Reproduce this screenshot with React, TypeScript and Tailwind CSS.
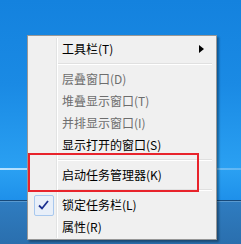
import React from "react";

const font = { fontFamily: '"Noto Sans CJK SC", "Microsoft YaHei", sans-serif' };

type Item =
  | { kind: "item"; label: string; disabled?: boolean; arrow?: boolean; checked?: boolean }
  | { kind: "sep" };

const items: Item[] = [
  { kind: "item", label: "工具栏(T)", arrow: true },
  { kind: "sep" },
  { kind: "item", label: "层叠窗口(D)", disabled: true },
  { kind: "item", label: "堆叠显示窗口(T)", disabled: true },
  { kind: "item", label: "并排显示窗口(I)", disabled: true },
  { kind: "item", label: "显示打开的窗口(S)" },
  { kind: "sep" },
  { kind: "item", label: "启动任务管理器(K)" },
  { kind: "sep" },
  { kind: "item", label: "锁定任务栏(L)", checked: true },
  { kind: "item", label: "属性(R)" },
];

const MenuRow = ({ item }: { item: Item }) => {
  if (item.kind === "sep") {
    return (
      <div className="flex h-[8px] items-center pl-[28px] pr-[2px]">
        <div className="h-[2px] flex-1 border-t border-[#e0e0e0] border-b-white" style={{ borderBottomWidth: 1, borderBottomStyle: "solid" }} />
      </div>
    );
  }
  return (
    <div className="flex h-[22px] items-center">
      <div className="flex w-[26px] justify-center pl-[1px]">
        {item.checked && (
          <div className="flex h-[21px] w-[20px] items-center justify-center rounded-[2px] border border-[#a8c8ee] bg-[#e8eff9]">
            <svg width="11" height="10" viewBox="0 0 11 10">
              <path d="M1 5.5 L4 8.5 L10 1" fill="none" stroke="#1b2f8f" strokeWidth="1.8" />
            </svg>
          </div>
        )}
      </div>
      <div
        className={`flex-1 pl-[6px] text-[12px] leading-none ${item.disabled ? "text-[#6d6d6d]" : "text-black"}`}
      >
        {item.label}
      </div>
      {item.arrow && (
        <svg width="5" height="8" viewBox="0 0 5 8" className="mr-[10px]">
          <path d="M0 0 L5 4 L0 8 Z" fill="#000" />
        </svg>
      )}
    </div>
  );
};

export default function App() {
  return (
    <div className="relative h-[244px] w-[241px] overflow-hidden" style={font}>
      <div className="flex h-full flex-col">
        <div className="h-[168px] bg-gradient-to-b from-[#1482de] via-[#1a8ae4] to-[#2aa0f2]" />
        <div className="h-[2px] bg-gradient-to-r from-[#b8e2ff] via-[#8dcdf8] to-[#5fb6f4]" />
        <div className="h-[30px] bg-gradient-to-b from-[#2aa0f2] to-[#1e90ea]" />
        <div className="h-[1px] bg-[#17497a]" />
        <div className="flex-1 border-t border-[#5a9ad0] bg-gradient-to-b from-[#2f7cc0] to-[#2a6fae]" />
      </div>

      <div className="absolute left-[27px] top-[35px] w-[190px] border border-[#979797] bg-[#f0f0f0] px-[2px] pb-[1px] pt-[2px] shadow-[2px_2px_2px_rgba(0,0,0,0.35)]">
        <div className="relative flex flex-col">
          <div className="absolute bottom-0 left-[26px] top-0 w-[2px] border-l border-[#e2e3e3] border-r-white" style={{ borderRightWidth: 1, borderRightStyle: "solid" }} />
          {items.map((it, i) => (
            <MenuRow key={i} item={it} />
          ))}
        </div>
      </div>

      <div className="absolute left-[28px] top-[153px] h-[39px] w-[171px] border-2 border-[#e8232b]" />
    </div>
  );
}
